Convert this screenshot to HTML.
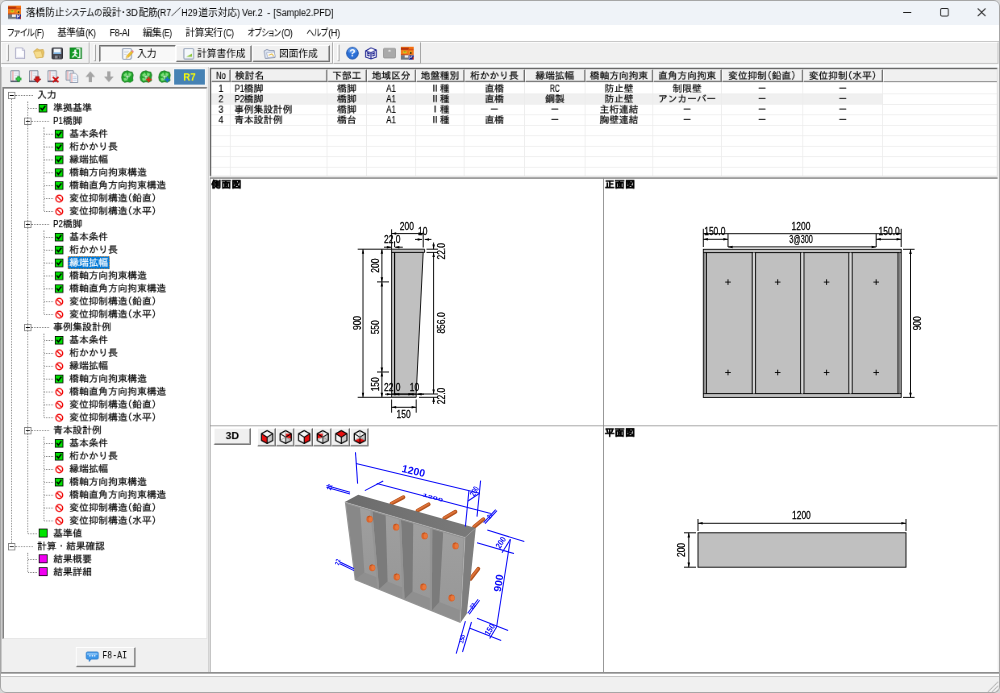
<!DOCTYPE html>
<html lang="ja"><head><meta charset="utf-8"><title>落橋防止システムの設計・3D配筋</title>
<style>
html,body{margin:0;padding:0;background:#f0f0f0;overflow:hidden;}
body{width:1000px;height:693px;position:relative;}
#app{will-change:transform;position:absolute;left:0;top:0;width:1240px;height:860px;transform-origin:0 0;transform:scale(0.80645,0.80581);background:#f0f0f0;font-family:"Liberation Sans","IPAGothic",sans-serif;font-size:12px;color:#000;overflow:hidden;}
#app *{box-sizing:border-box;}
.abs{position:absolute;}
i{display:block;font-style:normal;}
.ui{font-family:"Liberation Sans","Noto Sans CJK JP",sans-serif;}
#title{left:0;top:0;width:1240px;height:31px;background:#eff3f8;}
#title .t{left:32px;top:7px;font-size:12px;white-space:nowrap;line-height:17px;letter-spacing:-0.45px;}
#menu{left:0;top:31px;width:1240px;height:20px;background:#fff;}
#menu span{position:absolute;top:2px;line-height:17px;font-size:12px;white-space:nowrap;letter-spacing:-0.6px;}
.band{position:absolute;top:52px;height:27px;border:1px solid;border-color:#fff #a0a0a0 #a0a0a0 #fff;background:#f0f0f0;}
.grip{position:absolute;top:2px;height:21px;width:3px;border:1px solid;border-color:#fff #a0a0a0 #a0a0a0 #fff;}
.btn{position:absolute;top:3px;height:21px;border:1px solid;border-color:#fff #696969 #696969 #fff;background:#f0f0f0;box-shadow:inset -1px -1px 0 #a0a0a0;font-size:12px;line-height:18px;white-space:nowrap;}
.btn.down{border-color:#696969 #fff #fff #696969;box-shadow:inset 1px 1px 0 #a0a0a0;background:#f8f8f8;}
.btn span{position:absolute;top:1px;}
.tic{position:absolute;}
#lefttb{left:3px;top:83px;width:252px;height:25px;}
#r7{left:215px;top:85px;width:40px;height:21px;background:#4682b4;color:#ffff00;font-weight:bold;font-size:12px;line-height:21px;text-align:center;border:1px solid #f8f8f8;}
#tree{left:3px;top:108px;width:254px;height:685px;background:#fff;border:1px solid #e3e3e3;border-top:2px solid #828282;border-left:2px solid #828282;overflow:hidden;}
.tr{-webkit-text-stroke:0.2px #000;position:absolute;height:16px;line-height:16px;white-space:nowrap;font-size:12px;}
.tr.sel{-webkit-text-stroke:0.2px #fff;background:#0078d7;color:#fff;padding:0 2px;outline:1px dotted #e08020;outline-offset:-1px;}
.ic{position:absolute;}
.sq{position:absolute;width:11px;height:11px;border:1px solid #000;}
.pm{position:absolute;width:9px;height:9px;border:1px solid #808080;background:#fff;}
.pm:after{content:"";position:absolute;left:1px;top:3px;width:5px;height:1px;background:#000;}
.hl{position:absolute;height:0;border-top:1px dotted #707070;}
.vl{position:absolute;width:0;border-left:1px dotted #707070;}
.pl{display:inline-block;margin-left:-6px;}
.pr{display:inline-block;margin-right:-6px;}
.lt{display:inline-block;transform-origin:0 50%;}
#f8btn{left:94px;top:803px;width:74px;height:25px;}
#grid{left:260px;top:84px;width:977px;height:135px;background:#fff;border:1px solid #dcdcdc;border-top:2px solid #696969;border-left:2px solid #696969;overflow:hidden;}
.th{-webkit-text-stroke:0.2px #000;position:absolute;top:0;height:16px;line-height:14px;font-size:12px;text-align:center;white-space:nowrap;background:#f0f0f0;border:1px solid;border-color:#fff #696969 #696969 #fff;box-shadow:inset -1px -1px 0 #a0a0a0;}
.row{position:absolute;left:0;height:13px;width:975px;border-bottom:1px solid #ececec;}
.c{-webkit-text-stroke:0.2px #000;position:absolute;top:0;height:13px;line-height:13px;font-size:12px;text-align:center;white-space:nowrap;}
.gv{position:absolute;top:16px;width:1px;height:120px;background:#ececec;}
.panel{position:absolute;background:#fff;border-top:1px solid #8c8c8c;border-left:1.5px solid #858585;overflow:hidden;}
.plabel{position:absolute;left:1px;top:2px;font-weight:bold;font-size:12px;line-height:12px;white-space:nowrap;letter-spacing:0.6px;-webkit-text-stroke:0.45px #000;}
#status{left:0;top:834px;width:1240px;height:26px;background:#f0f0f0;}
#draw{position:absolute;left:0;top:0;width:1000px;height:693px;overflow:hidden;}
#draw text{font-family:"Liberation Sans","IPAGothic",sans-serif;}
.rn{position:absolute;white-space:nowrap;line-height:17px;transform-origin:0 50%;display:block;}
#leftbg{left:0;top:83px;width:259px;height:751px;background:#f0f0f0;border-right:1px solid #d0d0d0;border-left:2px solid #b4b4b4;}
#frame{position:absolute;left:0;top:0;width:1000px;height:693px;box-sizing:border-box;border:1px solid #a6a6a6;border-radius:6px;box-shadow:0 0 0 8px #d6d6d6;pointer-events:none;}
#split{left:259px;top:83px;width:1px;height:751px;background:#fff;}
#p1,#p2{border-top:2px solid #9a9a9a;}

</style></head><body>
<div id="app">
<div id="title" class="abs ui">
 <svg class="abs" style="left:9.500px;top:7px" width="16.500" height="16.500" viewBox="0 0 16 16"><rect width="16" height="10.500" y="0" fill="#f27a1a"/><rect x="0" y="1.200" width="10" height="2.600" fill="#b4300c"/><rect x="9" y="2.500" width="7" height="1.800" fill="#d85010"/><rect x="10.500" y="0" width="5.500" height="1" fill="#ff6a00"/><ellipse cx="5.200" cy="6.800" rx="2.400" ry="1.500" fill="#d8d020"/><ellipse cx="5" cy="6.300" rx="1.200" ry="0.800" fill="#7a9a18"/><ellipse cx="12" cy="7" rx="1.800" ry="1.400" fill="#e8c020"/><circle cx="12.600" cy="7.800" r="1" fill="#201808"/><rect x="0" y="9.300" width="9" height="1.200" fill="#c83c10"/><rect y="10.500" width="9.800" height="5.500" fill="#707880"/><rect x="4.800" y="10.500" width="4.600" height="3" fill="#f0f0f0"/><rect x="9.800" y="10.500" width="6.200" height="5.500" fill="#14208c"/><path d="M11 15V11.500L12.800 13.500L14.200 11" fill="none" stroke="#e8e8f8" stroke-width="1"/><rect x="14.500" y="13" width="1.500" height="3" fill="#b82818"/></svg>
 <span class="rn" style="left:32.0px;top:8px;font-size:12px;transform:scaleX(0.997);">落橋防止</span><span class="rn" style="left:79.9px;top:8px;font-size:12px;font-feature-settings:'palt';transform:scaleX(0.844);">システムの</span><span class="rn" style="left:126.5px;top:8px;font-size:12px;transform:scaleX(0.981);">設計</span><span class="rn" style="left:149.9px;top:8px;font-size:12px;transform:scaleX(0.989);">･</span><span class="rn" style="left:156.2px;top:8px;font-size:12px;transform:scaleX(0.986);">3D</span><span class="rn" style="left:171.5px;top:8px;font-size:12px;transform:scaleX(0.981);">配筋</span><span class="rn" style="left:195.1px;top:8px;font-size:12px;transform:scaleX(0.897);">(R7</span><span class="rn" style="left:211.5px;top:8px;font-size:12px;transform:scaleX(1.032);">／</span><span class="rn" style="left:224.8px;top:8px;font-size:12px;transform:scaleX(0.901);">H29</span><span class="rn" style="left:245.8px;top:8px;font-size:12px;transform:scaleX(1.002);">道示対応</span><span class="rn" style="left:293.6px;top:8px;font-size:12px;transform:scaleX(0.868);">)</span><span class="rn" style="left:300.3px;top:8px;font-size:12px;transform:scaleX(0.943);">Ver.2</span><span class="rn" style="left:330.6px;top:8px;font-size:12px;transform:scaleX(1.116);">-</span><span class="rn" style="left:338.5px;top:8px;font-size:12px;transform:scaleX(0.917);">[Sample2.PFD]</span>
 <svg class="abs" style="left:1102px;top:0" width="138" height="31" viewBox="0 0 138 31"><path d="M18 15.500h10" stroke="#1a1a1a" stroke-width="1"/><rect x="64.500" y="10.500" width="9.500" height="9.500" rx="1.500" fill="none" stroke="#1a1a1a" stroke-width="1.100"/><path d="M110.500 10.500l9.500 9.500M120 10.500l-9.500 9.500" stroke="#1a1a1a" stroke-width="1.100"/></svg>
</div>
<div id="menu" class="abs ui">
 <span class="rn" style="left:8.7px;top:2px;font-size:12px;font-feature-settings:'palt';transform:scaleX(0.853);">ファイル</span><span class="rn" style="left:43.2px;top:2px;font-size:12px;transform:scaleX(0.825);">(F)</span><span class="rn" style="left:71.3px;top:2px;font-size:12px;transform:scaleX(0.992);">基準値</span><span class="rn" style="left:106.1px;top:2px;font-size:12px;transform:scaleX(0.884);">(K)</span><span class="rn" style="left:135.8px;top:2px;font-size:12px;transform:scaleX(0.930);">F8-AI</span><span class="rn" style="left:177.3px;top:2px;font-size:12px;transform:scaleX(1.012);">編集</span><span class="rn" style="left:200.6px;top:2px;font-size:12px;transform:scaleX(0.829);">(E)</span><span class="rn" style="left:229.5px;top:2px;font-size:12px;transform:scaleX(1.005);">計算実行</span><span class="rn" style="left:276.8px;top:2px;font-size:12px;transform:scaleX(0.855);">(C)</span><span class="rn" style="left:306.5px;top:2px;font-size:12px;font-feature-settings:'palt';transform:scaleX(0.818);">オプション</span><span class="rn" style="left:348.9px;top:2px;font-size:12px;transform:scaleX(0.873);">(O)</span><span class="rn" style="left:380.3px;top:2px;font-size:12px;font-feature-settings:'palt';transform:scaleX(0.803);">ヘルプ</span><span class="rn" style="left:407.2px;top:2px;font-size:12px;transform:scaleX(0.952);">(H)</span>
</div>
<i class="abs" style="left:0;top:51px;width:1240px;height:1px;background:#c8c8c8"></i>
<div class="abs" style="left:0;top:52px;width:1238px;height:27px;border:1px solid;border-color:#fff #b8b8b8 #b8b8b8 #fff;"></div>
<div class="band" style="left:1px;width:110px;"><i class="grip" style="left:6px"></i><svg class="tic" style="left:15px;top:5px" width="16" height="16" viewBox="0 0 16 16"><path d="M2.5 1.5h8l3 3v10h-11z" fill="#fdfdff" stroke="#a9a9c4" stroke-width="1.2" stroke-linejoin="round"/><path d="M10.500 1.500v3h3" fill="#e8e8f4" stroke="#b4b4cc" stroke-width="0.8"/><path d="M3.5 13.5h9" stroke="#dcdcec" stroke-width="1.5"/></svg><svg class="tic" style="left:38px;top:5px" width="16" height="16" viewBox="0 0 16 16"><path d="M2 5.5 L6 2.500 L9 4 L13.500 3.500 L14.500 7 L13.500 13 L5 14 Z" fill="#e9c565" stroke="#c9a040" stroke-width="0.8" stroke-linejoin="round"/><path d="M1.500 6 L11 5 L13 13 L5 14 Z" fill="#f6dc8c" stroke="#d2ae55" stroke-width="0.7" stroke-linejoin="round"/></svg><svg class="tic" style="left:61px;top:5px" width="16" height="16" viewBox="0 0 16 16"><rect x="1.5" y="1.5" width="13" height="13.5" rx="1" fill="#45464e" stroke="#2c2c34" stroke-width="1"/><rect x="3.500" y="2.500" width="9" height="6.500" fill="#f4f8fc"/><rect x="3.500" y="7" width="9" height="2" fill="#7db4e4"/><rect x="5" y="11" width="6.500" height="3.500" fill="#8a8c94"/><rect x="8.500" y="11.500" width="2" height="3" fill="#33343c"/></svg><svg class="tic" style="left:84px;top:5px" width="16" height="16" viewBox="0 0 16 16"><rect x="1" y="1.500" width="14" height="13" fill="#119a25"/><rect x="1" y="1.500" width="14" height="13" fill="none" stroke="#0b7a1a" stroke-width="1"/><path d="M8.500 2.500h4.500v11h-3" fill="none" stroke="#fff" stroke-width="1.5"/><circle cx="7.300" cy="4.800" r="1.300" fill="#fff"/><path d="M4.500 7.500 L7.500 6.500 L9.500 8.500 M7.500 6.800 L6.800 10 L9 12 M6.800 10 L4 12.800" fill="none" stroke="#fff" stroke-width="1.6" stroke-linecap="round"/></svg></div>
<div class="band ui" style="left:111px;width:302px;"><i class="grip" style="left:4px"></i>
 <div class="btn down" style="left:11px;width:95px"><svg class="tic" style="left:26px;top:2px" width="17" height="16" viewBox="0 0 17 16"><path d="M2 2.500 Q2 1.500 3 1.500 H12 Q13 1.500 13 2.500 V12 Q13 14.500 10.500 14.500 H3.500 Q2 14.500 2 13 Z" fill="#f7f9fc" stroke="#8593ad" stroke-width="1.200"/><path d="M4 4.500h6M4 6.500h5M4 8.500h3" stroke="#c4ccd9" stroke-width="0.800"/><path d="M6.200 13.300 L7 10.500 L13 4.300 L15 6.200 L9 12.500 Z" fill="#f0c22c" stroke="#b98a18" stroke-width="0.600"/><path d="M13 4.300 L14.200 3.100 L16 4.900 L15 6.200 Z" fill="#ec7a90"/><path d="M6.200 13.300 L7 10.500 L9 12.500 Z" fill="#f3dcb0"/></svg><span style="left:46px">入力</span></div>
 <div class="btn" style="left:106px;width:94px"><svg class="tic" style="left:7px;top:2px" width="16" height="16" viewBox="0 0 16 16"><path d="M2 2.500 Q2 1.500 3 1.500 H13 Q14 1.500 14 2.500 V13 Q14 14.500 12.500 14.500 H3.500 Q2 14.500 2 13 Z" fill="#f4f8fb" stroke="#8c9bb3" stroke-width="1.200"/><path d="M5 11.500 L12 7.500 V11.500 Z" fill="#8cc63f"/><path d="M3 13.500h10" stroke="#c9d2de" stroke-width="1.200"/></svg><span style="left:25.5px">計算書作成</span></div>
 <div class="btn" style="left:201px;width:96px"><svg class="tic" style="left:12px;top:2px" width="17" height="16" viewBox="0 0 17 16"><path d="M1.500 4 L5 2.500 L8 3.500 L14 3.500 L15 12.500 L3 13.500 Z" fill="#dfe6f2" stroke="#8793ae" stroke-width="1" stroke-linejoin="round"/><path d="M4.500 6.500 L14 5.500 L15.500 11.500 L6 12.500 Z" fill="#fbfcfe" stroke="#9aa6c0" stroke-width="0.800"/><path d="M7 9.500 L11 8 L13.500 10.500" fill="none" stroke="#e4b83c" stroke-width="1.200"/></svg><span style="left:32px">図面作成</span></div>
</div>
<div class="band" style="left:413px;width:109px;"><i class="grip" style="left:4px"></i><svg class="tic" style="left:14.5px;top:5px" width="16" height="16" viewBox="0 0 16 16"><circle cx="8" cy="8" r="7.300" fill="#2a6fd6" stroke="#1d4fa4" stroke-width="1"/><ellipse cx="8" cy="5" rx="5.500" ry="3.500" fill="#6aa3f0" opacity="0.700"/><text x="8" y="12.300" text-anchor="middle" font-family="Liberation Sans,sans-serif" font-weight="bold" font-size="12.500" fill="#fff">?</text></svg><svg class="tic" style="left:37.5px;top:5px" width="16" height="16" viewBox="0 0 16 16"><path d="M1.500 5 L8 1.500 L14.500 4 L14.500 13 L8 15 L1.500 13 Z" fill="#fff" stroke="#141a8c" stroke-width="1.300" stroke-linejoin="round"/><path d="M1.500 5 L8 7.500 L14.500 4 M8 7.500 V15" fill="none" stroke="#141a8c" stroke-width="1.300"/><path d="M3 7.500 L6.500 9 M3 10 L6.500 11.500 M9.500 9 L13 7.500 M9.500 11.500 L13 10" stroke="#141a8c" stroke-width="1.600"/></svg><svg class="tic" style="left:60.5px;top:5px" width="16" height="16" viewBox="0 0 16 16"><rect x="0.500" y="2" width="15" height="12" rx="1.200" fill="#a9a9a9" stroke="#909090" stroke-width="0.800"/><path d="M6.500 5.500 L8 4.300 L9.500 5.500" fill="none" stroke="#e4e4e4" stroke-width="1.200"/></svg><svg class="tic" style="left:83px;top:5px" width="16" height="16" viewBox="0 0 16 16"><rect width="16" height="10.500" y="0" fill="#f27a1a"/><rect x="0" y="1.200" width="10" height="2.600" fill="#b4300c"/><rect x="9" y="2.500" width="7" height="1.800" fill="#d85010"/><rect x="10.500" y="0" width="5.500" height="1" fill="#ff6a00"/><ellipse cx="5.200" cy="6.800" rx="2.400" ry="1.500" fill="#d8d020"/><ellipse cx="5" cy="6.300" rx="1.200" ry="0.800" fill="#7a9a18"/><ellipse cx="12" cy="7" rx="1.800" ry="1.400" fill="#e8c020"/><circle cx="12.600" cy="7.800" r="1" fill="#201808"/><rect x="0" y="9.300" width="9" height="1.200" fill="#c83c10"/><rect y="10.500" width="9.800" height="5.500" fill="#707880"/><rect x="4.800" y="10.500" width="4.600" height="3" fill="#f0f0f0"/><rect x="9.800" y="10.500" width="6.200" height="5.500" fill="#14208c"/><path d="M11 15V11.500L12.800 13.500L14.200 11" fill="none" stroke="#e8e8f8" stroke-width="1"/><rect x="14.500" y="13" width="1.500" height="3" fill="#b82818"/></svg></div>
<i class="abs" style="left:0;top:80px;width:1240px;height:4px;background:#fbfcfd"></i>
<div id="leftbg" class="abs"></div><i id="split" class="abs"></i><div id="lefttb" class="abs"><svg class="tic" style="left:9px;top:4px" width="16" height="17" viewBox="0 0 16 17"><path d="M1.500 0.800h10.500v13h-10.500z" fill="#eef1f7" stroke="#7c8699" stroke-width="1"/><path d="M4 1.300v12" stroke="#e88f8f" stroke-width="1.100"/><path d="M6 4h4.500M6 6.500h4.500" stroke="#d5dbe6" stroke-width="1"/><path d="M1 14h11.500" stroke="#4e5668" stroke-width="1.800"/><path d="M11 7.500v7M7.500 11h7" stroke="#0d8a1c" stroke-width="3.200"/><path d="M11 8.300v5.400M8.300 11h5.400" stroke="#35d048" stroke-width="1.600"/></svg><svg class="tic" style="left:32px;top:4px" width="16" height="17" viewBox="0 0 16 17"><path d="M1.500 0.800h10.500v13h-10.500z" fill="#eef1f7" stroke="#7c8699" stroke-width="1"/><path d="M4 1.300v12" stroke="#e88f8f" stroke-width="1.100"/><path d="M6 4h4.500M6 6.500h4.500" stroke="#d5dbe6" stroke-width="1"/><path d="M1 14h11.500" stroke="#4e5668" stroke-width="1.800"/><path d="M9 8h4.500v3h2.300l-4.500 4.500l-4.500-4.500h2.200z" fill="#d01414" stroke="#8e0c0c" stroke-width="0.800"/></svg><svg class="tic" style="left:55px;top:4px" width="16" height="17" viewBox="0 0 16 17"><path d="M1.500 0.800h10.500v13h-10.500z" fill="#eef1f7" stroke="#7c8699" stroke-width="1"/><path d="M4 1.300v12" stroke="#e88f8f" stroke-width="1.100"/><path d="M6 4h4.500M6 6.500h4.500" stroke="#d5dbe6" stroke-width="1"/><path d="M1 14h11.500" stroke="#4e5668" stroke-width="1.800"/><path d="M7.500 8.500l7 6.500M14.500 8.500l-7 6.500" stroke="#d01010" stroke-width="2.200"/></svg><svg class="tic" style="left:78px;top:4px" width="16" height="17" viewBox="0 0 16 17"><path d="M1 0.800h9v11.500h-9z" fill="#eef1f7" stroke="#7c8699" stroke-width="1"/><path d="M3 1.300v10.500" stroke="#e88f8f" stroke-width="1"/><path d="M6 4h6.500l3 3v8.500h-9.500z" fill="#f4f7fb" stroke="#8a94a8" stroke-width="1"/><path d="M8 4.500v10.500" stroke="#e88f8f" stroke-width="1"/><path d="M9.500 8.500h4.500M9.500 10.500h4.500M9.500 12.500h4.500" stroke="#b9cce6" stroke-width="1"/></svg><svg class="tic" style="left:101px;top:4px" width="16" height="17" viewBox="0 0 16 17"><path d="M8 1.500 L14 8.500 H10 V15 H6 V8.500 H2 Z" fill="#a4a4a4"/></svg><svg class="tic" style="left:124px;top:4px" width="16" height="17" viewBox="0 0 16 17"><path d="M8 15 L14 8 H10 V1.500 H6 V8 H2 Z" fill="#a4a4a4"/></svg><svg class="tic" style="left:147px;top:4px" width="16" height="17" viewBox="0 0 16 17"><path d="M8 0.800 L11 2 L14 2.500 L15.200 6 L14.500 10 L15 13 L11.500 15.200 L8 14.500 L4.500 15.300 L1.500 13 L0.800 9 L1.500 5 L3.500 2 Z" fill="#22a32c" stroke="#14701c" stroke-width="0.800"/><path d="M3 6 L6.500 3 L8 5.500 L5 8.500 Z M9.500 3 L13 4.500 L12 7.500 L9 6.500 Z M3 10.500 L6 9.500 L7.500 12.500 L4.500 13.500 Z" fill="#7be07a"/><path d="M8 6.500v6M6 8h5" stroke="#e9f5e9" stroke-width="1"/><path d="M11.500 8.500v6.500M8.200 11.800h6.600" stroke="#19a528" stroke-width="2"/></svg><svg class="tic" style="left:170px;top:4px" width="16" height="17" viewBox="0 0 16 17"><path d="M8 0.800 L11 2 L14 2.500 L15.200 6 L14.500 10 L15 13 L11.500 15.200 L8 14.500 L4.500 15.300 L1.500 13 L0.800 9 L1.500 5 L3.500 2 Z" fill="#22a32c" stroke="#14701c" stroke-width="0.800"/><path d="M3 6 L6.500 3 L8 5.500 L5 8.500 Z M9.500 3 L13 4.500 L12 7.500 L9 6.500 Z M3 10.500 L6 9.500 L7.500 12.500 L4.500 13.500 Z" fill="#7be07a"/><path d="M8 6.500v6M6 8h5" stroke="#e9f5e9" stroke-width="1"/><path d="M11.500 8.500v6.500M8.200 11.800h6.600" stroke="#e02818" stroke-width="2"/></svg><svg class="tic" style="left:193px;top:4px" width="16" height="17" viewBox="0 0 16 17"><path d="M8 0.800 L11 2 L14 2.500 L15.200 6 L14.500 10 L15 13 L11.500 15.200 L8 14.500 L4.500 15.300 L1.500 13 L0.800 9 L1.500 5 L3.500 2 Z" fill="#22a32c" stroke="#14701c" stroke-width="0.800"/><path d="M3 6 L6.500 3 L8 5.500 L5 8.500 Z M9.500 3 L13 4.500 L12 7.500 L9 6.500 Z M3 10.500 L6 9.500 L7.500 12.500 L4.500 13.500 Z" fill="#7be07a"/><path d="M8 6.500v6M6 8h5" stroke="#e9f5e9" stroke-width="1"/><path d="M11.500 8.500v6.500M8.200 11.800h6.600" stroke="#1a6ed0" stroke-width="2"/></svg></div>
<div id="r7" class="abs">R7</div>
<div id="f8btn" class="btn abs"><svg class="tic" style="left:10px;top:4px" width="18" height="14" viewBox="0 0 18 14"><path d="M2 2.500 Q2 1 3.500 1 H15.500 Q17 1 17 2.500 V8.500 Q17 10 15.500 10 H8 L5.500 13 V10 H3.500 Q2 10 2 8.500 Z" fill="#3d97ea" stroke="#1f6fc0" stroke-width="0.800"/><path d="M3 3 Q3 2 4 2 H15 Q16 2 16 3 V5 H3 Z" fill="#8cc6f8" opacity="0.800"/><circle cx="6.500" cy="5.800" r="0.900" fill="#fff"/><circle cx="9.500" cy="5.800" r="0.900" fill="#fff"/><circle cx="12.500" cy="5.800" r="0.900" fill="#fff"/></svg><span class="rn" style="left:31.5px;top:2px;font-size:12px;transform:scaleX(0.847);font-family:'Liberation Mono',monospace;">F8-AI</span></div>
<div id="status" class="abs"><i class="abs" style="left:0;top:0;width:1240px;height:2px;background:#8e8e8e"></i><i class="abs" style="left:0;top:2px;width:1240px;height:3px;background:#fff"></i><i class="abs" style="left:0;top:5px;width:1240px;height:1px;background:#c4c4c4"></i><svg class="abs" style="left:1222px;top:9px" width="16" height="16" viewBox="0 0 16 16"><path d="M3 16L16 3M8 16L16 8M13 16L16 13" stroke="#b4b4b4" stroke-width="1.400"/><path d="M4.500 16L16 4.500M9.500 16L16 9.500" stroke="#fff" stroke-width="1"/></svg></div>
<div id="tree" class="abs">
<i class="hl" style="left:14px;top:8px;width:22px"></i><i class="pm" style="left:5px;top:4px"></i><span class="tr" style="left:41px;top:0px">入力</span>
<i class="hl" style="left:30px;top:24px;width:11px"></i><svg class="ic" style="left:43px;top:19px" width="10.5" height="10.5" viewBox="0 0 11 11"><rect x="0.5" y="0.5" width="10" height="10" fill="#00e400" stroke="#000"/><path d="M2.3 5 L4.6 7.6 L8.6 2.6" fill="none" stroke="#000" stroke-width="1.9"/></svg><span class="tr" style="left:61px;top:16px">準拠基準</span>
<i class="hl" style="left:34px;top:40px;width:22px"></i><i class="pm" style="left:25px;top:36px"></i><span class="tr" style="left:61px;top:32px"><span class="lt" style="transform:scaleX(0.817);margin-right:-2.69px">P1</span>橋脚</span>
<i class="hl" style="left:50px;top:56px;width:11px"></i><svg class="ic" style="left:63px;top:51px" width="10.5" height="10.5" viewBox="0 0 11 11"><rect x="0.5" y="0.5" width="10" height="10" fill="#00e400" stroke="#000"/><path d="M2.3 5 L4.6 7.6 L8.6 2.6" fill="none" stroke="#000" stroke-width="1.9"/></svg><span class="tr" style="left:81px;top:48px">基本条件</span>
<i class="hl" style="left:50px;top:72px;width:11px"></i><svg class="ic" style="left:63px;top:67px" width="10.5" height="10.5" viewBox="0 0 11 11"><rect x="0.5" y="0.5" width="10" height="10" fill="#00e400" stroke="#000"/><path d="M2.3 5 L4.6 7.6 L8.6 2.6" fill="none" stroke="#000" stroke-width="1.9"/></svg><span class="tr" style="left:81px;top:64px">桁かかり長</span>
<i class="hl" style="left:50px;top:88px;width:11px"></i><svg class="ic" style="left:63px;top:83px" width="10.5" height="10.5" viewBox="0 0 11 11"><rect x="0.5" y="0.5" width="10" height="10" fill="#00e400" stroke="#000"/><path d="M2.3 5 L4.6 7.6 L8.6 2.6" fill="none" stroke="#000" stroke-width="1.9"/></svg><span class="tr" style="left:81px;top:80px">縁端拡幅</span>
<i class="hl" style="left:50px;top:104px;width:11px"></i><svg class="ic" style="left:63px;top:99px" width="10.5" height="10.5" viewBox="0 0 11 11"><rect x="0.5" y="0.5" width="10" height="10" fill="#00e400" stroke="#000"/><path d="M2.3 5 L4.6 7.6 L8.6 2.6" fill="none" stroke="#000" stroke-width="1.9"/></svg><span class="tr" style="left:81px;top:96px">橋軸方向拘束構造</span>
<i class="hl" style="left:50px;top:120px;width:11px"></i><svg class="ic" style="left:63px;top:115px" width="10.5" height="10.5" viewBox="0 0 11 11"><rect x="0.5" y="0.5" width="10" height="10" fill="#00e400" stroke="#000"/><path d="M2.3 5 L4.6 7.6 L8.6 2.6" fill="none" stroke="#000" stroke-width="1.9"/></svg><span class="tr" style="left:81px;top:112px">橋軸直角方向拘束構造</span>
<i class="hl" style="left:50px;top:136px;width:11px"></i><svg class="ic" style="left:63px;top:131px" width="11" height="11" viewBox="0 0 11 11"><circle cx="5.5" cy="5.5" r="4.2" fill="#fff" stroke="#f00000" stroke-width="1.5"/><path d="M2.6 2.8 L8.4 8.2" stroke="#f00000" stroke-width="1.5"/></svg><span class="tr" style="left:81px;top:128px">変位抑制構造<span class="pl">（</span>鉛直<span class="pr">）</span></span>
<i class="hl" style="left:50px;top:152px;width:11px"></i><svg class="ic" style="left:63px;top:147px" width="11" height="11" viewBox="0 0 11 11"><circle cx="5.5" cy="5.5" r="4.2" fill="#fff" stroke="#f00000" stroke-width="1.5"/><path d="M2.6 2.8 L8.4 8.2" stroke="#f00000" stroke-width="1.5"/></svg><span class="tr" style="left:81px;top:144px">変位抑制構造<span class="pl">（</span>水平<span class="pr">）</span></span>
<i class="hl" style="left:34px;top:168px;width:22px"></i><i class="pm" style="left:25px;top:164px"></i><span class="tr" style="left:61px;top:160px"><span class="lt" style="transform:scaleX(0.817);margin-right:-2.69px">P2</span>橋脚</span>
<i class="hl" style="left:50px;top:184px;width:11px"></i><svg class="ic" style="left:63px;top:179px" width="10.5" height="10.5" viewBox="0 0 11 11"><rect x="0.5" y="0.5" width="10" height="10" fill="#00e400" stroke="#000"/><path d="M2.3 5 L4.6 7.6 L8.6 2.6" fill="none" stroke="#000" stroke-width="1.9"/></svg><span class="tr" style="left:81px;top:176px">基本条件</span>
<i class="hl" style="left:50px;top:200px;width:11px"></i><svg class="ic" style="left:63px;top:195px" width="10.5" height="10.5" viewBox="0 0 11 11"><rect x="0.5" y="0.5" width="10" height="10" fill="#00e400" stroke="#000"/><path d="M2.3 5 L4.6 7.6 L8.6 2.6" fill="none" stroke="#000" stroke-width="1.9"/></svg><span class="tr" style="left:81px;top:192px">桁かかり長</span>
<i class="hl" style="left:50px;top:216px;width:11px"></i><svg class="ic" style="left:63px;top:211px" width="10.5" height="10.5" viewBox="0 0 11 11"><rect x="0.5" y="0.5" width="10" height="10" fill="#00e400" stroke="#000"/><path d="M2.3 5 L4.6 7.6 L8.6 2.6" fill="none" stroke="#000" stroke-width="1.9"/></svg><span class="tr sel" style="left:79px;top:208px">縁端拡幅</span>
<i class="hl" style="left:50px;top:232px;width:11px"></i><svg class="ic" style="left:63px;top:227px" width="10.5" height="10.5" viewBox="0 0 11 11"><rect x="0.5" y="0.5" width="10" height="10" fill="#00e400" stroke="#000"/><path d="M2.3 5 L4.6 7.6 L8.6 2.6" fill="none" stroke="#000" stroke-width="1.9"/></svg><span class="tr" style="left:81px;top:224px">橋軸方向拘束構造</span>
<i class="hl" style="left:50px;top:248px;width:11px"></i><svg class="ic" style="left:63px;top:243px" width="10.5" height="10.5" viewBox="0 0 11 11"><rect x="0.5" y="0.5" width="10" height="10" fill="#00e400" stroke="#000"/><path d="M2.3 5 L4.6 7.6 L8.6 2.6" fill="none" stroke="#000" stroke-width="1.9"/></svg><span class="tr" style="left:81px;top:240px">橋軸直角方向拘束構造</span>
<i class="hl" style="left:50px;top:264px;width:11px"></i><svg class="ic" style="left:63px;top:259px" width="11" height="11" viewBox="0 0 11 11"><circle cx="5.5" cy="5.5" r="4.2" fill="#fff" stroke="#f00000" stroke-width="1.5"/><path d="M2.6 2.8 L8.4 8.2" stroke="#f00000" stroke-width="1.5"/></svg><span class="tr" style="left:81px;top:256px">変位抑制構造<span class="pl">（</span>鉛直<span class="pr">）</span></span>
<i class="hl" style="left:50px;top:280px;width:11px"></i><svg class="ic" style="left:63px;top:275px" width="11" height="11" viewBox="0 0 11 11"><circle cx="5.5" cy="5.5" r="4.2" fill="#fff" stroke="#f00000" stroke-width="1.5"/><path d="M2.6 2.8 L8.4 8.2" stroke="#f00000" stroke-width="1.5"/></svg><span class="tr" style="left:81px;top:272px">変位抑制構造<span class="pl">（</span>水平<span class="pr">）</span></span>
<i class="hl" style="left:34px;top:296px;width:22px"></i><i class="pm" style="left:25px;top:292px"></i><span class="tr" style="left:61px;top:288px">事例集設計例</span>
<i class="hl" style="left:50px;top:312px;width:11px"></i><svg class="ic" style="left:63px;top:307px" width="10.5" height="10.5" viewBox="0 0 11 11"><rect x="0.5" y="0.5" width="10" height="10" fill="#00e400" stroke="#000"/><path d="M2.3 5 L4.6 7.6 L8.6 2.6" fill="none" stroke="#000" stroke-width="1.9"/></svg><span class="tr" style="left:81px;top:304px">基本条件</span>
<i class="hl" style="left:50px;top:328px;width:11px"></i><svg class="ic" style="left:63px;top:323px" width="11" height="11" viewBox="0 0 11 11"><circle cx="5.5" cy="5.5" r="4.2" fill="#fff" stroke="#f00000" stroke-width="1.5"/><path d="M2.6 2.8 L8.4 8.2" stroke="#f00000" stroke-width="1.5"/></svg><span class="tr" style="left:81px;top:320px">桁かかり長</span>
<i class="hl" style="left:50px;top:344px;width:11px"></i><svg class="ic" style="left:63px;top:339px" width="11" height="11" viewBox="0 0 11 11"><circle cx="5.5" cy="5.5" r="4.2" fill="#fff" stroke="#f00000" stroke-width="1.5"/><path d="M2.6 2.8 L8.4 8.2" stroke="#f00000" stroke-width="1.5"/></svg><span class="tr" style="left:81px;top:336px">縁端拡幅</span>
<i class="hl" style="left:50px;top:360px;width:11px"></i><svg class="ic" style="left:63px;top:355px" width="10.5" height="10.5" viewBox="0 0 11 11"><rect x="0.5" y="0.5" width="10" height="10" fill="#00e400" stroke="#000"/><path d="M2.3 5 L4.6 7.6 L8.6 2.6" fill="none" stroke="#000" stroke-width="1.9"/></svg><span class="tr" style="left:81px;top:352px">橋軸方向拘束構造</span>
<i class="hl" style="left:50px;top:376px;width:11px"></i><svg class="ic" style="left:63px;top:371px" width="11" height="11" viewBox="0 0 11 11"><circle cx="5.5" cy="5.5" r="4.2" fill="#fff" stroke="#f00000" stroke-width="1.5"/><path d="M2.6 2.8 L8.4 8.2" stroke="#f00000" stroke-width="1.5"/></svg><span class="tr" style="left:81px;top:368px">橋軸直角方向拘束構造</span>
<i class="hl" style="left:50px;top:392px;width:11px"></i><svg class="ic" style="left:63px;top:387px" width="11" height="11" viewBox="0 0 11 11"><circle cx="5.5" cy="5.5" r="4.2" fill="#fff" stroke="#f00000" stroke-width="1.5"/><path d="M2.6 2.8 L8.4 8.2" stroke="#f00000" stroke-width="1.5"/></svg><span class="tr" style="left:81px;top:384px">変位抑制構造<span class="pl">（</span>鉛直<span class="pr">）</span></span>
<i class="hl" style="left:50px;top:408px;width:11px"></i><svg class="ic" style="left:63px;top:403px" width="11" height="11" viewBox="0 0 11 11"><circle cx="5.5" cy="5.5" r="4.2" fill="#fff" stroke="#f00000" stroke-width="1.5"/><path d="M2.6 2.8 L8.4 8.2" stroke="#f00000" stroke-width="1.5"/></svg><span class="tr" style="left:81px;top:400px">変位抑制構造<span class="pl">（</span>水平<span class="pr">）</span></span>
<i class="hl" style="left:34px;top:424px;width:22px"></i><i class="pm" style="left:25px;top:420px"></i><span class="tr" style="left:61px;top:416px">青本設計例</span>
<i class="hl" style="left:50px;top:440px;width:11px"></i><svg class="ic" style="left:63px;top:435px" width="10.5" height="10.5" viewBox="0 0 11 11"><rect x="0.5" y="0.5" width="10" height="10" fill="#00e400" stroke="#000"/><path d="M2.3 5 L4.6 7.6 L8.6 2.6" fill="none" stroke="#000" stroke-width="1.9"/></svg><span class="tr" style="left:81px;top:432px">基本条件</span>
<i class="hl" style="left:50px;top:456px;width:11px"></i><svg class="ic" style="left:63px;top:451px" width="10.5" height="10.5" viewBox="0 0 11 11"><rect x="0.5" y="0.5" width="10" height="10" fill="#00e400" stroke="#000"/><path d="M2.3 5 L4.6 7.6 L8.6 2.6" fill="none" stroke="#000" stroke-width="1.9"/></svg><span class="tr" style="left:81px;top:448px">桁かかり長</span>
<i class="hl" style="left:50px;top:472px;width:11px"></i><svg class="ic" style="left:63px;top:467px" width="11" height="11" viewBox="0 0 11 11"><circle cx="5.5" cy="5.5" r="4.2" fill="#fff" stroke="#f00000" stroke-width="1.5"/><path d="M2.6 2.8 L8.4 8.2" stroke="#f00000" stroke-width="1.5"/></svg><span class="tr" style="left:81px;top:464px">縁端拡幅</span>
<i class="hl" style="left:50px;top:488px;width:11px"></i><svg class="ic" style="left:63px;top:483px" width="10.5" height="10.5" viewBox="0 0 11 11"><rect x="0.5" y="0.5" width="10" height="10" fill="#00e400" stroke="#000"/><path d="M2.3 5 L4.6 7.6 L8.6 2.6" fill="none" stroke="#000" stroke-width="1.9"/></svg><span class="tr" style="left:81px;top:480px">橋軸方向拘束構造</span>
<i class="hl" style="left:50px;top:504px;width:11px"></i><svg class="ic" style="left:63px;top:499px" width="11" height="11" viewBox="0 0 11 11"><circle cx="5.5" cy="5.5" r="4.2" fill="#fff" stroke="#f00000" stroke-width="1.5"/><path d="M2.6 2.8 L8.4 8.2" stroke="#f00000" stroke-width="1.5"/></svg><span class="tr" style="left:81px;top:496px">橋軸直角方向拘束構造</span>
<i class="hl" style="left:50px;top:520px;width:11px"></i><svg class="ic" style="left:63px;top:515px" width="11" height="11" viewBox="0 0 11 11"><circle cx="5.5" cy="5.5" r="4.2" fill="#fff" stroke="#f00000" stroke-width="1.5"/><path d="M2.6 2.8 L8.4 8.2" stroke="#f00000" stroke-width="1.5"/></svg><span class="tr" style="left:81px;top:512px">変位抑制構造<span class="pl">（</span>鉛直<span class="pr">）</span></span>
<i class="hl" style="left:50px;top:536px;width:11px"></i><svg class="ic" style="left:63px;top:531px" width="11" height="11" viewBox="0 0 11 11"><circle cx="5.5" cy="5.5" r="4.2" fill="#fff" stroke="#f00000" stroke-width="1.5"/><path d="M2.6 2.8 L8.4 8.2" stroke="#f00000" stroke-width="1.5"/></svg><span class="tr" style="left:81px;top:528px">変位抑制構造<span class="pl">（</span>水平<span class="pr">）</span></span>
<i class="hl" style="left:30px;top:552px;width:11px"></i><i class="sq" style="left:43px;top:546px;background:#00e400"></i><span class="tr" style="left:61px;top:544px">基準値</span>
<i class="hl" style="left:14px;top:568px;width:22px"></i><i class="pm" style="left:5px;top:564px"></i><span class="tr" style="left:41px;top:560px">計算・結果確認</span>
<i class="hl" style="left:30px;top:584px;width:11px"></i><i class="sq" style="left:43px;top:578px;background:#f000f0"></i><span class="tr" style="left:61px;top:576px">結果概要</span>
<i class="hl" style="left:30px;top:600px;width:11px"></i><i class="sq" style="left:43px;top:594px;background:#f000f0"></i><span class="tr" style="left:61px;top:592px">結果詳細</span>
<i class="vl" style="left:9px;top:13px;height:551px"></i><i class="vl" style="left:29px;top:16px;height:536px"></i><i class="vl" style="left:29px;top:576px;height:24px"></i><i class="vl" style="left:49px;top:48px;height:104px"></i><i class="vl" style="left:49px;top:176px;height:104px"></i><i class="vl" style="left:49px;top:304px;height:104px"></i><i class="vl" style="left:49px;top:432px;height:104px"></i></div>
<div id="grid" class="abs">
<div class="th" style="left:0px;width:23.5px;"><span class="lt" style="transform:scaleX(0.782);margin-right:-3.34px">No</span></div><div class="th" style="left:23.5px;width:120px;text-align:left;padding-left:5px;">検討名</div><div class="th" style="left:143.5px;width:49px;">下部工</div><div class="th" style="left:192.5px;width:61px;">地域区分</div><div class="th" style="left:253.5px;width:60px;">地盤種別</div><div class="th" style="left:313.5px;width:75px;">桁かかり長</div><div class="th" style="left:388.5px;width:75px;">縁端拡幅</div><div class="th" style="left:463.5px;width:84px;">橋軸方向拘束</div><div class="th" style="left:547.5px;width:85px;">直角方向拘束</div><div class="th" style="left:632.5px;width:101px;">変位抑制<span class="pl">（</span>鉛直<span class="pr">）</span></div><div class="th" style="left:733.5px;width:99px;">変位抑制<span class="pl">（</span>水平<span class="pr">）</span></div><div class="th" style="left:832.5px;width:142.5px;border-right:none;box-shadow:none"></div>
<div class="row" style="top:18px;"><div style="position:absolute;left:0;top:0;width:832.5px;height:13px;"></div><span class="c" style="left:0px;width:23.5px"><span class="lt" style="transform:scaleX(0.897);margin-right:-0.69px">1</span></span><span class="c" style="left:28.5px;text-align:left"><span class="lt" style="transform:scaleX(0.817);margin-right:-2.69px">P1</span>橋脚</span><span class="c" style="left:143.5px;width:49px">橋脚</span><span class="c" style="left:192.5px;width:61px"><span class="lt" style="transform:scaleX(0.817);margin-right:-2.69px">A1</span></span><span class="c" style="left:253.5px;width:60px">Ⅱ種</span><span class="c" style="left:313.5px;width:75px">直橋</span><span class="c" style="left:388.5px;width:75px"><span class="lt" style="transform:scaleX(0.692);margin-right:-5.34px">RC</span></span><span class="c" style="left:463.5px;width:84px">防止壁</span><span class="c" style="left:547.5px;width:85px">制限壁</span><span class="c" style="left:632.5px;width:101px">－</span><span class="c" style="left:733.5px;width:99px">－</span></div>
<div class="row" style="top:31px;"><div style="position:absolute;left:0;top:0;width:832.5px;height:13px;background:#f0f0f0;"></div><span class="c" style="left:0px;width:23.5px"><span class="lt" style="transform:scaleX(0.897);margin-right:-0.69px">2</span></span><span class="c" style="left:28.5px;text-align:left"><span class="lt" style="transform:scaleX(0.817);margin-right:-2.69px">P2</span>橋脚</span><span class="c" style="left:143.5px;width:49px">橋脚</span><span class="c" style="left:192.5px;width:61px"><span class="lt" style="transform:scaleX(0.817);margin-right:-2.69px">A1</span></span><span class="c" style="left:253.5px;width:60px">Ⅱ種</span><span class="c" style="left:313.5px;width:75px">直橋</span><span class="c" style="left:388.5px;width:75px">鋼製</span><span class="c" style="left:463.5px;width:84px">防止壁</span><span class="c" style="left:547.5px;width:85px">アンカーバー</span><span class="c" style="left:632.5px;width:101px">－</span><span class="c" style="left:733.5px;width:99px">－</span></div>
<div class="row" style="top:44px;"><div style="position:absolute;left:0;top:0;width:832.5px;height:13px;"></div><span class="c" style="left:0px;width:23.5px"><span class="lt" style="transform:scaleX(0.897);margin-right:-0.69px">3</span></span><span class="c" style="left:28.5px;text-align:left">事例集設計例</span><span class="c" style="left:143.5px;width:49px">橋脚</span><span class="c" style="left:192.5px;width:61px"><span class="lt" style="transform:scaleX(0.817);margin-right:-2.69px">A1</span></span><span class="c" style="left:253.5px;width:60px">Ⅰ種</span><span class="c" style="left:313.5px;width:75px">－</span><span class="c" style="left:388.5px;width:75px">－</span><span class="c" style="left:463.5px;width:84px">主桁連結</span><span class="c" style="left:547.5px;width:85px">－</span><span class="c" style="left:632.5px;width:101px">－</span><span class="c" style="left:733.5px;width:99px">－</span></div>
<div class="row" style="top:57px;"><div style="position:absolute;left:0;top:0;width:832.5px;height:13px;"></div><span class="c" style="left:0px;width:23.5px"><span class="lt" style="transform:scaleX(0.897);margin-right:-0.69px">4</span></span><span class="c" style="left:28.5px;text-align:left">青本設計例</span><span class="c" style="left:143.5px;width:49px">橋台</span><span class="c" style="left:192.5px;width:61px"><span class="lt" style="transform:scaleX(0.817);margin-right:-2.69px">A1</span></span><span class="c" style="left:253.5px;width:60px">Ⅱ種</span><span class="c" style="left:313.5px;width:75px">直橋</span><span class="c" style="left:388.5px;width:75px">－</span><span class="c" style="left:463.5px;width:84px">胸壁連結</span><span class="c" style="left:547.5px;width:85px">－</span><span class="c" style="left:632.5px;width:101px">－</span><span class="c" style="left:733.5px;width:99px">－</span></div>
<div class="row" style="top:70px;"><div style="position:absolute;left:0;top:0;width:832.5px;height:13px;"></div></div>
<div class="row" style="top:83px;"><div style="position:absolute;left:0;top:0;width:832.5px;height:13px;"></div></div>
<div class="row" style="top:96px;"><div style="position:absolute;left:0;top:0;width:832.5px;height:13px;"></div></div>
<div class="row" style="top:109px;"><div style="position:absolute;left:0;top:0;width:832.5px;height:13px;"></div></div>
<div class="row" style="top:122px;"><div style="position:absolute;left:0;top:0;width:832.5px;height:13px;"></div></div>
<i class="gv" style="left:22.5px"></i><i class="gv" style="left:142.5px"></i><i class="gv" style="left:191.5px"></i><i class="gv" style="left:252.5px"></i><i class="gv" style="left:312.5px"></i><i class="gv" style="left:387.5px"></i><i class="gv" style="left:462.5px"></i><i class="gv" style="left:546.5px"></i><i class="gv" style="left:631.5px"></i><i class="gv" style="left:732.5px"></i><i class="gv" style="left:831.5px"></i></div>
<div class="panel" id="p1" style="left:260px;top:220px;width:488px;height:308px;"><div class="plabel" style="top:1px">側面図</div></div>
<div class="panel" id="p2" style="left:748px;top:220px;width:489px;height:308px;"><div class="plabel" style="top:1px">正面図</div></div>
<div class="panel" id="p3" style="left:260px;top:528px;width:488px;height:306px;"><div class="btn" style="left:4px;top:1.5px;width:46px;height:21px;font-family:'Liberation Sans',sans-serif;font-weight:bold;font-size:13px;line-height:17px;text-align:center">3D</div><div class="btn" style="left:58px;top:2px;width:23px;height:23px;"><svg class="tic" style="left:1.5px;top:1px" width="18.5" height="18.5" viewBox="0 0 16 16"><polygon points="8,1.2 14,4.5 14,11.8 8,15 2,11.8 2,4.5" fill="#f4f4f4"/><polygon points="8,8.2 14,4.5 14,11.8 8,15" fill="#c8c8c8"/><polygon points="2,4.5 8,8.2 8,15 2,11.8" fill="#e81010"/><path d="M8 1.200L14 4.500V11.800L8 15L2 11.800V4.500Z" fill="none" stroke="#000" stroke-width="1.200" stroke-linejoin="round"/><path d="M8 15V8.200M2 4.500L8 8.200L14 4.500" fill="none" stroke="#000" stroke-width="1"/></svg></div><div class="btn" style="left:81px;top:2px;width:23px;height:23px;"><svg class="tic" style="left:1.5px;top:1px" width="18.5" height="18.5" viewBox="0 0 16 16"><polygon points="8,1.2 14,4.5 14,11.8 8,15 2,11.8 2,4.5" fill="#f4f4f4"/><polygon points="8,8.2 14,4.5 14,11.8 8,15" fill="#c8c8c8"/><polygon points="8,4.5 14,4.5 14,10 8,8.2" fill="#e81010"/><path d="M8 1.200L14 4.500V11.800L8 15L2 11.800V4.500Z" fill="none" stroke="#000" stroke-width="1.200" stroke-linejoin="round"/><path d="M8 15V8.200M2 4.500L8 8.200L14 4.500" fill="none" stroke="#000" stroke-width="0.900"/><path d="M8 1.200V8.200M2 11.800L8 8.200L14 11.800" fill="none" stroke="#777" stroke-width="0.600"/></svg></div><div class="btn" style="left:104px;top:2px;width:23px;height:23px;"><svg class="tic" style="left:1.5px;top:1px" width="18.5" height="18.5" viewBox="0 0 16 16"><polygon points="8,1.2 14,4.5 14,11.8 8,15 2,11.8 2,4.5" fill="#f4f4f4"/><polygon points="8,8.2 14,4.5 14,11.8 8,15" fill="#c8c8c8"/><polygon points="8,8.2 14,4.5 14,11.8 8,15" fill="#e81010"/><path d="M8 1.200L14 4.500V11.800L8 15L2 11.800V4.500Z" fill="none" stroke="#000" stroke-width="1.200" stroke-linejoin="round"/><path d="M8 15V8.200M2 4.500L8 8.200L14 4.500" fill="none" stroke="#000" stroke-width="1"/></svg></div><div class="btn" style="left:127px;top:2px;width:23px;height:23px;"><svg class="tic" style="left:1.5px;top:1px" width="18.5" height="18.5" viewBox="0 0 16 16"><polygon points="8,1.2 14,4.5 14,11.8 8,15 2,11.8 2,4.5" fill="#f4f4f4"/><polygon points="8,8.2 14,4.5 14,11.8 8,15" fill="#c8c8c8"/><polygon points="8,4.5 2,4.5 2,10 8,8.2" fill="#e81010"/><path d="M8 1.200L14 4.500V11.800L8 15L2 11.800V4.500Z" fill="none" stroke="#000" stroke-width="1.200" stroke-linejoin="round"/><path d="M8 15V8.200M2 4.500L8 8.200L14 4.500" fill="none" stroke="#000" stroke-width="0.900"/><path d="M8 1.200V8.200M2 11.800L8 8.200L14 11.800" fill="none" stroke="#777" stroke-width="0.600"/></svg></div><div class="btn" style="left:150px;top:2px;width:23px;height:23px;"><svg class="tic" style="left:1.5px;top:1px" width="18.5" height="18.5" viewBox="0 0 16 16"><polygon points="8,1.2 14,4.5 14,11.8 8,15 2,11.8 2,4.5" fill="#f4f4f4"/><polygon points="8,8.2 14,4.5 14,11.8 8,15" fill="#c8c8c8"/><polygon points="8,1.2 14,4.5 8,8.2 2,4.5" fill="#e81010"/><path d="M8 1.200L14 4.500V11.800L8 15L2 11.800V4.500Z" fill="none" stroke="#000" stroke-width="1.200" stroke-linejoin="round"/><path d="M8 15V8.200M2 4.500L8 8.200L14 4.500" fill="none" stroke="#000" stroke-width="1"/></svg></div><div class="btn" style="left:173px;top:2px;width:23px;height:23px;"><svg class="tic" style="left:1.5px;top:1px" width="18.5" height="18.5" viewBox="0 0 16 16"><polygon points="8,1.2 14,4.5 14,11.8 8,15 2,11.8 2,4.5" fill="#f4f4f4"/><polygon points="8,8.2 14,4.5 14,11.8 8,15" fill="#c8c8c8"/><polygon points="2,11.8 8,9.5 14,11.8 8,15" fill="#e81010"/><path d="M8 1.200L14 4.500V11.800L8 15L2 11.800V4.500Z" fill="none" stroke="#000" stroke-width="1.200" stroke-linejoin="round"/><path d="M8 15V8.200M2 4.500L8 8.200L14 4.500" fill="none" stroke="#000" stroke-width="0.900"/><path d="M8 1.200V8.200M2 11.800L8 8.200L14 11.800" fill="none" stroke="#777" stroke-width="0.600"/></svg></div></div>
<div class="panel" id="p4" style="left:748px;top:528px;width:489px;height:306px;"><div class="plabel">平面図</div></div>
</div>
<svg id="draw" width="1000" height="693" viewBox="0 0 1000 693">
<g id="side">
<path d="M391.6 249.2H424.6V252.4H423.2L416.2 394V397.3H391.6Z" fill="#c0c0c0" stroke="#000" stroke-width="0.9"/>
<path d="M391.6 252.4L423.2 252.4" stroke="#000" stroke-width="0.95" fill="none"/>
<path d="M391.6 394.0L416.2 394.0" stroke="#000" stroke-width="0.95" fill="none"/>
<path d="M394.6 252.4L394.6 394.0" stroke="#000" stroke-width="1.1" fill="none"/>
<path d="M357.7 249.2L391.6 249.2" stroke="#000" stroke-width="0.95" fill="none"/>
<path d="M357.7 397.3L391.6 397.3" stroke="#000" stroke-width="0.95" fill="none"/>
<path d="M363.0 249.2L363.0 397.3" stroke="#000" stroke-width="0.95" fill="none"/>
<path d="M363.0 249.2L364.2 253.8L361.8 253.8Z" fill="#000"/>
<path d="M363.0 397.3L361.8 392.7L364.2 392.7Z" fill="#000"/>
<text transform="translate(357.0 323.0) rotate(-90) scale(0.8 1)" text-anchor="middle" font-size="10.6" fill="#000" stroke="#000" stroke-width="0.25" y="3.8">900</text>
<path d="M381.9 249.2L381.9 397.3" stroke="#000" stroke-width="0.95" fill="none"/>
<path d="M381.9 249.2L383.1 253.8L380.6 253.8Z" fill="#000"/>
<path d="M381.9 281.9L380.6 277.3L383.1 277.3Z" fill="#000"/>
<path d="M381.9 281.9L383.1 286.5L380.6 286.5Z" fill="#000"/>
<path d="M381.9 372.0L380.6 367.4L383.1 367.4Z" fill="#000"/>
<path d="M381.9 372.0L383.1 376.6L380.6 376.6Z" fill="#000"/>
<path d="M381.9 397.3L380.6 392.7L383.1 392.7Z" fill="#000"/>
<path d="M377.0 281.9L389.0 281.9" stroke="#000" stroke-width="0.95" fill="none"/>
<path d="M377.0 372.0L389.0 372.0" stroke="#000" stroke-width="0.95" fill="none"/>
<text transform="translate(375.0 265.6) rotate(-90) scale(0.8 1)" text-anchor="middle" font-size="10.6" fill="#000" stroke="#000" stroke-width="0.25" y="3.8">200</text>
<text transform="translate(375.0 327.3) rotate(-90) scale(0.8 1)" text-anchor="middle" font-size="10.6" fill="#000" stroke="#000" stroke-width="0.25" y="3.8">550</text>
<text transform="translate(375.0 384.3) rotate(-90) scale(0.8 1)" text-anchor="middle" font-size="10.6" fill="#000" stroke="#000" stroke-width="0.25" y="3.8">150</text>
<path d="M391.6 229.3L391.6 249.2" stroke="#000" stroke-width="0.95" fill="none"/>
<path d="M423.2 231.5L423.2 247.5" stroke="#000" stroke-width="0.95" fill="none"/>
<path d="M391.6 233.6L423.2 233.6" stroke="#000" stroke-width="0.95" fill="none"/>
<path d="M391.6 233.6L396.2 232.3L396.2 234.8Z" fill="#000"/>
<path d="M423.2 233.6L418.6 234.8L418.6 232.3Z" fill="#000"/>
<text transform="translate(406.8 226.2) scale(0.8 1)" text-anchor="middle" font-size="10.6" fill="#000" stroke="#000" stroke-width="0.25" y="3.8">200</text>
<text transform="translate(422.8 231.2) scale(0.8 1)" text-anchor="middle" font-size="10.6" fill="#000" stroke="#000" stroke-width="0.25" y="3.8">10</text>
<path d="M415.0 239.4L422.0 239.4" stroke="#000" stroke-width="0.95" fill="none"/>
<path d="M422.3 239.4L417.7 240.7L417.7 238.2Z" fill="#000"/>
<path d="M424.8 239.4L431.4 239.4" stroke="#000" stroke-width="0.95" fill="none"/>
<path d="M424.4 239.4L429.0 238.2L429.0 240.7Z" fill="#000"/>
<text transform="translate(392.2 239.2) scale(0.8 1)" text-anchor="middle" font-size="10.6" fill="#000" stroke="#000" stroke-width="0.25" y="3.8">22.0</text>
<path d="M384.0 247.2L391.0 247.2" stroke="#000" stroke-width="0.95" fill="none"/>
<path d="M391.4 247.2L386.8 248.4L386.8 245.9Z" fill="#000"/>
<path d="M395.2 247.2L402.8 247.2" stroke="#000" stroke-width="0.95" fill="none"/>
<path d="M394.8 247.2L399.4 245.9L399.4 248.4Z" fill="#000"/>
<path d="M394.6 241.4L394.6 247.2" stroke="#000" stroke-width="0.95" fill="none"/>
<path d="M426.5 249.2L438.0 249.2" stroke="#000" stroke-width="0.95" fill="none"/>
<path d="M426.5 252.4L438.0 252.4" stroke="#000" stroke-width="0.95" fill="none"/>
<path d="M433.6 242.5L433.6 249.2" stroke="#000" stroke-width="0.95" fill="none"/>
<path d="M433.6 249.2L432.4 244.6L434.9 244.6Z" fill="#000"/>
<path d="M433.6 252.4L433.6 394.0" stroke="#000" stroke-width="0.95" fill="none"/>
<path d="M433.6 252.4L434.9 257.0L432.4 257.0Z" fill="#000"/>
<path d="M433.6 394.0L432.4 389.4L434.9 389.4Z" fill="#000"/>
<path d="M417.5 394.0L438.0 394.0" stroke="#000" stroke-width="0.95" fill="none"/>
<path d="M419.0 397.3L438.0 397.3" stroke="#000" stroke-width="0.95" fill="none"/>
<path d="M433.6 397.3L433.6 404.0" stroke="#000" stroke-width="0.95" fill="none"/>
<path d="M433.6 397.3L434.9 401.9L432.4 401.9Z" fill="#000"/>
<text transform="translate(441.0 251.3) rotate(-90) scale(0.8 1)" text-anchor="middle" font-size="10.6" fill="#000" stroke="#000" stroke-width="0.25" y="3.8">22.0</text>
<text transform="translate(441.0 323.0) rotate(-90) scale(0.8 1)" text-anchor="middle" font-size="10.6" fill="#000" stroke="#000" stroke-width="0.25" y="3.8">856.0</text>
<text transform="translate(441.0 396.0) rotate(-90) scale(0.8 1)" text-anchor="middle" font-size="10.6" fill="#000" stroke="#000" stroke-width="0.25" y="3.8">22.0</text>
<text transform="translate(392.2 386.8) scale(0.8 1)" text-anchor="middle" font-size="10.6" fill="#000" stroke="#000" stroke-width="0.25" y="3.8">22.0</text>
<text transform="translate(414.4 386.8) scale(0.8 1)" text-anchor="middle" font-size="10.6" fill="#000" stroke="#000" stroke-width="0.25" y="3.8">10</text>
<path d="M385.0 394.2L424.0 394.2" stroke="#000" stroke-width="0.95" fill="none"/>
<path d="M391.4 394.2L386.8 395.4L386.8 392.9Z" fill="#000"/>
<path d="M394.8 394.2L399.4 392.9L399.4 395.4Z" fill="#000"/>
<path d="M399.0 394.2L394.4 395.4L394.4 392.9Z" fill="#000"/>
<path d="M409.0 394.2L413.6 392.9L413.6 395.4Z" fill="#000"/>
<path d="M413.0 394.2L408.4 395.4L408.4 392.9Z" fill="#000"/>
<path d="M417.0 394.2L421.6 392.9L421.6 395.4Z" fill="#000"/>
<path d="M391.6 399.5L391.6 412.7" stroke="#000" stroke-width="0.95" fill="none"/>
<path d="M416.2 399.5L416.2 412.7" stroke="#000" stroke-width="0.95" fill="none"/>
<path d="M391.6 407.3L416.2 407.3" stroke="#000" stroke-width="0.95" fill="none"/>
<path d="M391.6 407.3L396.2 406.1L396.2 408.6Z" fill="#000"/>
<path d="M416.2 407.3L411.6 408.6L411.6 406.1Z" fill="#000"/>
<text transform="translate(403.6 414.0) scale(0.8 1)" text-anchor="middle" font-size="10.6" fill="#000" stroke="#000" stroke-width="0.25" y="3.8">150</text>
</g>
<g id="front">
<rect x="703.3" y="249.3" width="197.9" height="148.1" fill="#c0c0c0" stroke="#000" stroke-width="0.9"/>
<path d="M703.3 252.6L901.2 252.6" stroke="#000" stroke-width="0.95" fill="none"/>
<path d="M703.3 393.6L901.2 393.6" stroke="#000" stroke-width="0.95" fill="none"/>
<path d="M706.4 252.6L706.4 393.6" stroke="#000" stroke-width="0.95" fill="none"/>
<path d="M898.0 252.6L898.0 393.6" stroke="#000" stroke-width="0.95" fill="none"/>
<path d="M704.8 252.6L704.8 393.6" stroke="#666" stroke-width="0.8" fill="none"/>
<path d="M899.6 252.6L899.6 393.6" stroke="#666" stroke-width="0.8" fill="none"/>
<path d="M752.2 252.6L752.2 393.6" stroke="#000" stroke-width="0.9" fill="none"/>
<path d="M755.6 252.6L755.6 393.6" stroke="#000" stroke-width="0.9" fill="none"/>
<path d="M753.9 252.6L753.9 393.6" stroke="#d8d8d8" stroke-width="1.6" fill="none"/>
<path d="M800.6 252.6L800.6 393.6" stroke="#000" stroke-width="0.9" fill="none"/>
<path d="M804.0 252.6L804.0 393.6" stroke="#000" stroke-width="0.9" fill="none"/>
<path d="M802.3 252.6L802.3 393.6" stroke="#d8d8d8" stroke-width="1.6" fill="none"/>
<path d="M848.8 252.6L848.8 393.6" stroke="#000" stroke-width="0.9" fill="none"/>
<path d="M852.2 252.6L852.2 393.6" stroke="#000" stroke-width="0.9" fill="none"/>
<path d="M850.5 252.6L850.5 393.6" stroke="#d8d8d8" stroke-width="1.6" fill="none"/>
<path d="M725.2 282.1L730.8 282.1" stroke="#000" stroke-width="0.9" fill="none"/>
<path d="M728.0 279.3L728.0 284.9" stroke="#000" stroke-width="0.9" fill="none"/>
<path d="M725.2 372.5L730.8 372.5" stroke="#000" stroke-width="0.9" fill="none"/>
<path d="M728.0 369.7L728.0 375.3" stroke="#000" stroke-width="0.9" fill="none"/>
<path d="M774.9 282.1L780.5 282.1" stroke="#000" stroke-width="0.9" fill="none"/>
<path d="M777.7 279.3L777.7 284.9" stroke="#000" stroke-width="0.9" fill="none"/>
<path d="M774.9 372.5L780.5 372.5" stroke="#000" stroke-width="0.9" fill="none"/>
<path d="M777.7 369.7L777.7 375.3" stroke="#000" stroke-width="0.9" fill="none"/>
<path d="M823.8 282.1L829.4 282.1" stroke="#000" stroke-width="0.9" fill="none"/>
<path d="M826.6 279.3L826.6 284.9" stroke="#000" stroke-width="0.9" fill="none"/>
<path d="M823.8 372.5L829.4 372.5" stroke="#000" stroke-width="0.9" fill="none"/>
<path d="M826.6 369.7L826.6 375.3" stroke="#000" stroke-width="0.9" fill="none"/>
<path d="M873.4 282.1L879.0 282.1" stroke="#000" stroke-width="0.9" fill="none"/>
<path d="M876.2 279.3L876.2 284.9" stroke="#000" stroke-width="0.9" fill="none"/>
<path d="M873.4 372.5L879.0 372.5" stroke="#000" stroke-width="0.9" fill="none"/>
<path d="M876.2 369.7L876.2 375.3" stroke="#000" stroke-width="0.9" fill="none"/>
<path d="M703.3 228.8L703.3 247.0" stroke="#000" stroke-width="0.95" fill="none"/>
<path d="M901.2 228.8L901.2 247.0" stroke="#000" stroke-width="0.95" fill="none"/>
<path d="M728.0 233.7L728.0 247.0" stroke="#000" stroke-width="0.95" fill="none"/>
<path d="M876.2 233.7L876.2 247.0" stroke="#000" stroke-width="0.95" fill="none"/>
<path d="M703.3 233.7L901.2 233.7" stroke="#000" stroke-width="0.95" fill="none"/>
<path d="M703.3 233.7L707.9 232.4L707.9 234.9Z" fill="#000"/>
<path d="M901.2 233.7L896.6 234.9L896.6 232.4Z" fill="#000"/>
<text transform="translate(801.0 226.0) scale(0.8 1)" text-anchor="middle" font-size="10.6" fill="#000" stroke="#000" stroke-width="0.25" y="3.8">1200</text>
<path d="M703.3 239.3L728.0 239.3" stroke="#000" stroke-width="0.95" fill="none"/>
<path d="M703.3 239.3L707.9 238.1L707.9 240.6Z" fill="#000"/>
<path d="M728.0 239.3L723.4 240.6L723.4 238.1Z" fill="#000"/>
<path d="M876.2 239.3L901.2 239.3" stroke="#000" stroke-width="0.95" fill="none"/>
<path d="M876.2 239.3L880.8 238.1L880.8 240.6Z" fill="#000"/>
<path d="M901.2 239.3L896.6 240.6L896.6 238.1Z" fill="#000"/>
<text transform="translate(714.8 231.6) scale(0.8 1)" text-anchor="middle" font-size="10.6" fill="#000" stroke="#000" stroke-width="0.25" y="3.8">150.0</text>
<text transform="translate(889.2 231.6) scale(0.8 1)" text-anchor="middle" font-size="10.6" fill="#000" stroke="#000" stroke-width="0.25" y="3.8">150.0</text>
<text transform="translate(801.0 239.6) scale(0.69 1)" text-anchor="middle" font-size="10.6" fill="#000" stroke="#000" stroke-width="0.25" y="3.8">3@300</text>
<path d="M728.0 246.9L876.2 246.9" stroke="#000" stroke-width="0.95" fill="none"/>
<path d="M728.0 246.9L732.6 245.7L732.6 248.2Z" fill="#000"/>
<path d="M876.2 246.9L871.6 248.2L871.6 245.7Z" fill="#000"/>
<path d="M903.0 249.3L914.6 249.3" stroke="#000" stroke-width="0.95" fill="none"/>
<path d="M903.0 397.4L914.6 397.4" stroke="#000" stroke-width="0.95" fill="none"/>
<path d="M910.5 249.3L910.5 397.4" stroke="#000" stroke-width="0.95" fill="none"/>
<path d="M910.5 249.3L911.8 253.9L909.2 253.9Z" fill="#000"/>
<path d="M910.5 397.4L909.2 392.8L911.8 392.8Z" fill="#000"/>
<text transform="translate(917.6 323.3) rotate(-90) scale(0.8 1)" text-anchor="middle" font-size="10.6" fill="#000" stroke="#000" stroke-width="0.25" y="3.8">900</text>
</g>
<g id="plan">
<rect x="698" y="532.8" width="208" height="34.4" fill="#c0c0c0" stroke="#000" stroke-width="0.9"/>
<path d="M698.0 519.0L698.0 531.0" stroke="#000" stroke-width="0.95" fill="none"/>
<path d="M906.0 519.0L906.0 531.0" stroke="#000" stroke-width="0.95" fill="none"/>
<path d="M698.0 523.3L906.0 523.3" stroke="#000" stroke-width="0.95" fill="none"/>
<path d="M698.0 523.3L702.6 522.0L702.6 524.5Z" fill="#000"/>
<path d="M906.0 523.3L901.4 524.5L901.4 522.0Z" fill="#000"/>
<text transform="translate(801.4 515.3) scale(0.8 1)" text-anchor="middle" font-size="10.6" fill="#000" stroke="#000" stroke-width="0.25" y="3.8">1200</text>
<path d="M684.0 532.8L696.0 532.8" stroke="#000" stroke-width="0.95" fill="none"/>
<path d="M684.0 567.2L696.0 567.2" stroke="#000" stroke-width="0.95" fill="none"/>
<path d="M688.8 532.8L688.8 567.2" stroke="#000" stroke-width="0.95" fill="none"/>
<path d="M688.8 532.8L690.0 537.4L687.5 537.4Z" fill="#000"/>
<path d="M688.8 567.2L687.5 562.6L690.0 562.6Z" fill="#000"/>
<text transform="translate(681.4 550.0) rotate(-90) scale(0.8 1)" text-anchor="middle" font-size="10.6" fill="#000" stroke="#000" stroke-width="0.25" y="3.8">200</text>
</g>
<g id="v3d">
<defs><linearGradient id="gtop" x1="0" y1="0" x2="1" y2="0"><stop offset="0" stop-color="#6c6c6c"/><stop offset="1" stop-color="#7a7a7a"/></linearGradient><linearGradient id="gbk" x1="0" y1="0" x2="0" y2="1"><stop offset="0" stop-color="#a0a0a0"/><stop offset="1" stop-color="#969696"/></linearGradient></defs>
<path d="M391.5 503.6L403.4 497.2" stroke="#b6541f" stroke-width="3.9" stroke-linecap="round"/>
<path d="M391.3 503.2L403.2 496.8" stroke="#dd7238" stroke-width="1.75" stroke-linecap="round"/>
<path d="M417.6 510.6L428.6 504.4" stroke="#b6541f" stroke-width="3.9" stroke-linecap="round"/>
<path d="M417.4 510.2L428.4 504.0" stroke="#dd7238" stroke-width="1.75" stroke-linecap="round"/>
<path d="M444.3 518.2L455.4 511.8" stroke="#b6541f" stroke-width="3.9" stroke-linecap="round"/>
<path d="M444.1 517.8L455.2 511.4" stroke="#dd7238" stroke-width="1.75" stroke-linecap="round"/>
<path d="M474.2 526.8L483.4 519.2" stroke="#b6541f" stroke-width="3.9" stroke-linecap="round"/>
<path d="M473.9 526.4L483.1 518.8" stroke="#dd7238" stroke-width="1.75" stroke-linecap="round"/>
<path d="M470.6 578.8L478.3 568.9" stroke="#b6541f" stroke-width="3.9" stroke-linecap="round"/>
<path d="M470.2 578.5L477.9 568.6" stroke="#dd7238" stroke-width="1.75" stroke-linecap="round"/>
<polygon points="344.8,502.1 358.2,494.8 475.8,528.1 465.0,537.4" fill="url(#gtop)"/>
<polygon points="465.0,537.4 475.8,528.1 466.8,613.8 460.3,622.9" fill="#7e7e7e"/>
<polygon points="344.8,502.1 465.0,537.4 460.3,622.9 354.7,579.9" fill="#949494"/>
<clipPath id="cl0"><polygon points="346.0,503.8 370.3,511.0 377.3,588.2 355.5,579.4"/></clipPath>
<g clip-path="url(#cl0)">
<polygon points="341.0,496.3 377.2,506.6 384.2,595.7 352.3,582.5" fill="url(#gbk)"/>
<polygon points="355.5,579.4 377.3,588.2 389.1,582.1 364.4,572.4" fill="#8f8f8f"/>
<polygon points="345.6,500.8 359.1,493.5 364.4,572.4 355.5,579.4" fill="#888888"/>
</g>
<clipPath id="cl1"><polygon points="372.3,511.6 398.8,519.4 402.6,598.5 379.1,588.9"/></clipPath>
<g clip-path="url(#cl1)">
<polygon points="367.2,503.8 406.6,515.0 409.8,606.2 375.5,592.1" fill="url(#gbk)"/>
<polygon points="379.1,588.9 402.6,598.5 414.1,592.0 387.6,581.6" fill="#8f8f8f"/>
<polygon points="372.1,508.5 385.2,500.8 387.6,581.6 379.1,588.9" fill="#7b7b7b"/>
</g>
<clipPath id="cl2"><polygon points="401.0,520.0 429.8,528.5 429.8,609.5 404.5,599.2"/></clipPath>
<g clip-path="url(#cl2)">
<polygon points="395.7,511.9 438.6,524.2 437.4,617.6 400.4,602.4" fill="url(#gbk)"/>
<polygon points="404.5,599.2 429.8,609.5 440.9,602.6 412.5,591.4" fill="#8f8f8f"/>
<polygon points="400.8,516.9 413.4,508.8 412.5,591.4 404.5,599.2" fill="#7b7b7b"/>
</g>
<clipPath id="cl3"><polygon points="432.2,529.2 463.5,538.5 459.1,621.4 431.9,610.4"/></clipPath>
<g clip-path="url(#cl3)">
<polygon points="426.7,520.8 473.5,534.2 467.0,629.8 427.2,613.4" fill="url(#gbk)"/>
<polygon points="431.9,610.4 459.1,621.4 469.7,613.9 439.3,601.9" fill="#8f8f8f"/>
<polygon points="432.2,526.0 444.0,517.4 439.3,601.9 431.9,610.4" fill="#7b7b7b"/>
</g>
<polyline points="344.8,502.1 465.0,537.4 460.3,622.9" fill="none" stroke="#b0b0b0" stroke-width="0.5"/>
<ellipse cx="369.6" cy="519.2" rx="3.2" ry="3.4" fill="#d9642b"/>
<ellipse cx="370.5" cy="519.4" rx="1.9" ry="2.4" fill="#e9773a"/>
<path d="M367.4 517.2L369.8 516.0" stroke="#a94a1a" stroke-width="0.7"/>
<ellipse cx="396.1" cy="527.2" rx="3.2" ry="3.4" fill="#d9642b"/>
<ellipse cx="397.0" cy="527.4" rx="1.9" ry="2.4" fill="#e9773a"/>
<path d="M393.9 525.2L396.3 524.0" stroke="#a94a1a" stroke-width="0.7"/>
<ellipse cx="424.6" cy="535.9" rx="3.2" ry="3.4" fill="#d9642b"/>
<ellipse cx="425.5" cy="536.1" rx="1.9" ry="2.4" fill="#e9773a"/>
<path d="M422.4 533.9L424.8 532.7" stroke="#a94a1a" stroke-width="0.7"/>
<ellipse cx="455.5" cy="545.9" rx="3.2" ry="3.4" fill="#d9642b"/>
<ellipse cx="456.4" cy="546.1" rx="1.9" ry="2.4" fill="#e9773a"/>
<path d="M453.3 543.9L455.7 542.7" stroke="#a94a1a" stroke-width="0.7"/>
<ellipse cx="372.2" cy="567.8" rx="3.2" ry="3.4" fill="#d9642b"/>
<ellipse cx="373.1" cy="568.0" rx="1.9" ry="2.4" fill="#e9773a"/>
<path d="M370.0 565.8L372.4 564.6" stroke="#a94a1a" stroke-width="0.7"/>
<ellipse cx="396.7" cy="577.0" rx="3.2" ry="3.4" fill="#d9642b"/>
<ellipse cx="397.6" cy="577.2" rx="1.9" ry="2.4" fill="#e9773a"/>
<path d="M394.5 575.0L396.9 573.8" stroke="#a94a1a" stroke-width="0.7"/>
<ellipse cx="423.3" cy="587.0" rx="3.2" ry="3.4" fill="#d9642b"/>
<ellipse cx="424.2" cy="587.2" rx="1.9" ry="2.4" fill="#e9773a"/>
<path d="M421.1 585.0L423.5 583.8" stroke="#a94a1a" stroke-width="0.7"/>
<ellipse cx="451.6" cy="598.0" rx="3.2" ry="3.4" fill="#d9642b"/>
<ellipse cx="452.5" cy="598.2" rx="1.9" ry="2.4" fill="#e9773a"/>
<path d="M449.4 596.0L451.8 594.8" stroke="#a94a1a" stroke-width="0.7"/>
<path d="M356.0 463.4L479.7 493.2" stroke="#0c0cf8" stroke-width="1.05" fill="none"/>
<path d="M355.5 452.2L357.6 483.6" stroke="#0c0cf8" stroke-width="1.05" fill="none"/>
<path d="M480.6 480.6L477.0 516.6" stroke="#0c0cf8" stroke-width="1.05" fill="none"/>
<path d="M468.9 491.0L465.4 526.5" stroke="#0c0cf8" stroke-width="1.05" fill="none"/>
<text transform="translate(413.6 470.8) rotate(13.2) scale(1 1)" text-anchor="middle" font-size="10.5" font-weight="bold" fill="#0c0cf8" y="3.8">1200</text>
<path d="M468.0 501.0L479.7 493.2" stroke="#0c0cf8" stroke-width="1.05" fill="none"/>
<text transform="translate(474.2 491.2) rotate(-62) scale(0.7 1)" text-anchor="middle" font-size="8.5" font-weight="bold" fill="#0c0cf8" y="3.1">200</text>
<path d="M376.8 483.4L488.8 513.1" stroke="#0c0cf8" stroke-width="1.05" fill="none"/>
<path d="M364.8 490.6L383.2 481.0" stroke="#0c0cf8" stroke-width="1.05" fill="none"/>
<text transform="translate(432.8 497.4) rotate(15) scale(1 0.5)" text-anchor="middle" font-size="9.5" font-weight="bold" fill="#0c0cf8" y="3.4">1200</text>
<path d="M483.6 522.6L495.7 509.6" stroke="#0c0cf8" stroke-width="1.05" fill="none"/>
<path d="M485.0 523.6L497.0 510.6" stroke="#0c0cf8" stroke-width="1.05" fill="none"/>
<text transform="translate(489.8 515.6) rotate(-50) scale(0.8 1)" text-anchor="middle" font-size="6.5" font-weight="bold" fill="#0c0cf8" y="2.3">22</text>
<path d="M326.5 485.5L350.0 492.3" stroke="#0c0cf8" stroke-width="1.05" fill="none"/>
<path d="M326.5 487.3L350.0 494.1" stroke="#0c0cf8" stroke-width="1.05" fill="none"/>
<text transform="translate(329.6 487.2) rotate(-75) scale(0.8 1)" text-anchor="middle" font-size="6.5" font-weight="bold" fill="#0c0cf8" y="2.3">22</text>
<path d="M340.0 562.0L354.0 568.8" stroke="#0c0cf8" stroke-width="1.05" fill="none"/>
<path d="M340.0 563.8L354.0 570.6" stroke="#0c0cf8" stroke-width="1.05" fill="none"/>
<text transform="translate(337.6 562.0) rotate(-75) scale(0.8 1)" text-anchor="middle" font-size="6.5" font-weight="bold" fill="#0c0cf8" y="2.3">22</text>
<path d="M487.3 530.0L524.3 541.6" stroke="#0c0cf8" stroke-width="1.05" fill="none"/>
<path d="M477.0 542.7L514.0 553.6" stroke="#0c0cf8" stroke-width="1.05" fill="none"/>
<path d="M510.4 539.3L502.0 552.7" stroke="#0c0cf8" stroke-width="1.05" fill="none"/>
<text transform="translate(500.6 542.4) rotate(-57) scale(0.85 1)" text-anchor="middle" font-size="8.5" font-weight="bold" fill="#0c0cf8" y="3.1">200</text>
<path d="M510.4 539.3L496.6 627.0" stroke="#0c0cf8" stroke-width="1.05" fill="none"/>
<text transform="translate(498.4 583.1) rotate(-81) scale(1 1)" text-anchor="middle" font-size="10.5" font-weight="bold" fill="#0c0cf8" y="3.8">900</text>
<path d="M477.0 618.2L508.1 630.5" stroke="#0c0cf8" stroke-width="1.05" fill="none"/>
<path d="M470.0 628.2L501.2 640.4" stroke="#0c0cf8" stroke-width="1.05" fill="none"/>
<path d="M496.6 627.0L489.7 638.6" stroke="#0c0cf8" stroke-width="1.05" fill="none"/>
<text transform="translate(489.6 629.6) rotate(-57) scale(0.85 1)" text-anchor="middle" font-size="8.5" font-weight="bold" fill="#0c0cf8" y="3.1">150</text>
<path d="M465.4 621.2L456.2 653.6" stroke="#0c0cf8" stroke-width="1.05" fill="none"/>
<path d="M471.5 622.0L462.5 652.0" stroke="#0c0cf8" stroke-width="1.05" fill="none"/>
<text transform="translate(462.0 639.0) rotate(-75) scale(0.8 1)" text-anchor="middle" font-size="6.5" font-weight="bold" fill="#0c0cf8" y="2.3">150</text>
<path d="M467.7 613.2L478.1 599.3" stroke="#0c0cf8" stroke-width="1.05" fill="none"/>
<path d="M469.2 614.2L479.6 600.3" stroke="#0c0cf8" stroke-width="1.05" fill="none"/>
<text transform="translate(472.6 606.0) rotate(-52) scale(0.8 1)" text-anchor="middle" font-size="6.5" font-weight="bold" fill="#0c0cf8" y="2.3">22</text>
</g>
</svg>
<div id="frame"></div>
</body></html>
